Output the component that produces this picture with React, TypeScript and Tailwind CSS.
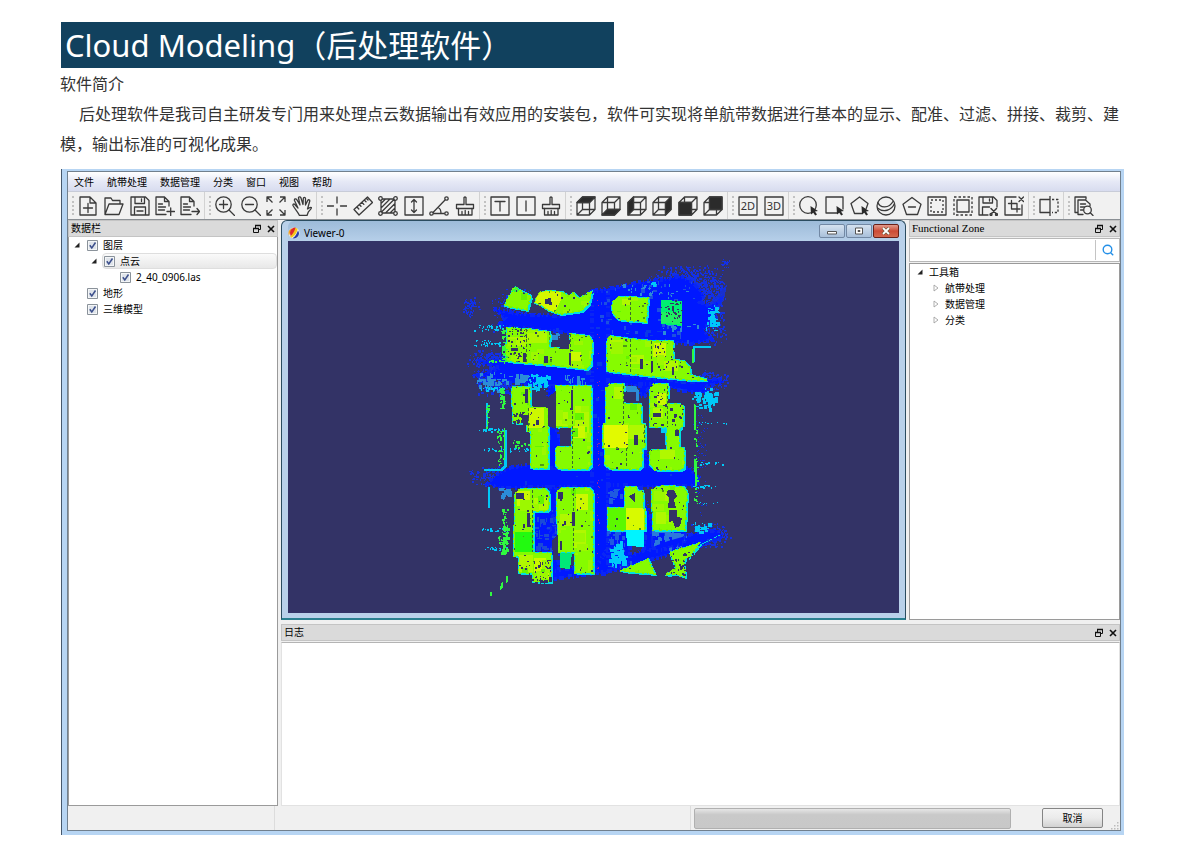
import React from 'react';

const uiFont = "font-['Noto_Sans','Noto_Sans_CJK_SC',sans-serif]";

/* ---------- toolbar icons ---------- */

function Icon({ children, label }: { children: React.ReactNode; label: string }) {
  return (
    <button type="button" aria-label={label} className="flex size-5 shrink-0 items-center justify-center">
      <svg viewBox="0 0 20 20" className="size-5" fill="none" stroke="#3a3a3a" strokeWidth="1.3" strokeLinejoin="round" strokeLinecap="round">
        {children}
      </svg>
    </button>
  );
}

const cursor = <path d="M11.5 10l7.500 5-3 .6 2 2.900-1.800 1.100-1.900-2.800-2.300 1.800z" fill="#2b2b2b" stroke="none" />;
const docLines = (
  <>
    <path d="M11 18.500H1V1h8.500l4.500 4.500V10M9.500 1v4.500H14" />
    <path d="M3.500 8h4M3.500 11h7M3.500 14h6" />
  </>
);
const brush = (
  <>
    <path d="M9 8.500V1.500q1-1 2 0V8.500h7.500v4H1.500v-4z" />
    <path d="M3.500 12.500v6.500h13.500v-6.500M7 19v-3.500M10.200 19v-4.500M13.500 19v-3.500" />
  </>
);
const cubeWire = <path d="M1 6.500h12.500V19H1zM6.500 1H19v12.500H6.500zM1 6.500L6.500 1M13.500 6.500L19 1M13.500 19l5.500-5.500M1 19l5.500-5.500" />;
const cube = (fill: string) => (
  <>
    {cubeWire}
    <path d={fill} fill="#2b2b2b" />
  </>
);
const floppy = 'M1 1h14.500L19 4.500V19H1zM5 1v6.500h9.500V1M11.500 3v2.500M4.500 19v-8h11v8';

type Tool = [string, React.ReactNode];
const groups: { width: string; tools: Tool[] }[] = [
  {
    width: 'w-[121px]',
    tools: [
      ['New', <path key="a" d="M1 1h10l6 6v12H1zM11 1v6h6M4.500 12h9M9 7.500v9" />],
      ['Open', <path key="a" d="M1 18.500V2h6l1.500 2.500H16V8M1 18.500L5 8h14l-4 10.500z" />],
      ['Save', <path key="a" d={floppy + 'M7 15h6'} />],
      ['Add file', <g key="a">{docLines}<path d="M12 15.500H19.500M15.700 12v7.500" /></g>],
      ['Export file', <g key="a">{docLines}<path d="M12 15.500h7.500M17 12.500l2.500 3-2.500 3" /></g>],
    ],
  },
  {
    width: 'w-[97px]',
    tools: [
      ['Zoom in', <g key="a"><circle cx="8.500" cy="8.500" r="7.700" /><path d="M14 14l5.500 5.500M4.500 8.500h8M8.500 4.500v8" /></g>],
      ['Zoom out', <g key="a"><circle cx="8.500" cy="8.500" r="7.700" /><path d="M14 14l5.500 5.500M4.500 8.500h8" /></g>],
      ['Fit view', <path key="a" strokeLinecap="butt" d="M1 6V1h5M1 1l5.500 5.500M14 1h5v5M19 1l-5.500 5.500M1 14v5h5M1 19l5.500-5.500M14 19h5v-5M19 19l-5.500-5.500" />],
      ['Pan', <path key="a" d="M7.500 19.500C6 16 2.500 12.500 1 9.500 .6 8 2 7.500 3 8.700L6 12 2.500 4.500C2 3 4 2.200 4.800 3.700L8 9 6.500 2C6.300.6 8.400.3 8.900 1.700L11 8.500l.3-6C11.400 1 13.400 1 13.500 2.500V9l2.200-4.500c.7-1.300 2.400-.6 2 .8L15.500 13c1.200-1 3-2.200 3.800-1.500.8.800-2 3-3 4.500L15 19.500z" />],
    ],
  },
  {
    width: 'w-[148px]',
    tools: [
      ['Pick point', <path key="a" d="M0 10h6.500M13.500 10H20M10 1v6M10 13v6" />],
      ['Measure distance', <path key="a" d="M1 13.500L14.500 1 19.500 6.500 6 19zM4 11l1.800 2M6.500 8.700L8 10.300M9 6.400l1.800 2M11.500 4.200L13 5.800M13.500 2.500l1.500 1.500" />],
      ['Measure area', <g key="a"><path d="M3 3h14v14H3zM3 7.500L7.500 3M3 12L12 3M3 16.500L16.500 3M7.500 17L17 7.500M12 17l5-5" /><g fill="#f1f1f1"><circle cx="2.500" cy="2.500" r="1.800" /><circle cx="17.500" cy="2.500" r="1.800" /><circle cx="2.500" cy="17.500" r="1.800" /><circle cx="17.500" cy="17.500" r="1.800" /></g></g>],
      ['Measure height', <path key="a" d="M1 1h18v18H1zM10 4v12M7.500 6L10 3.500 12.500 6M7.500 14l2.500 2.500 2.500-2.500" />],
      ['Measure angle', <g key="a"><path d="M16.500 3.500L4 16.500M4.500 17.500h12M9 11.500c2.500 1 3 3 3 6" /><g fill="#f1f1f1"><circle cx="17.500" cy="2.500" r="1.700" /><circle cx="2.500" cy="17.500" r="1.700" /><circle cx="17.500" cy="17.500" r="1.700" /></g></g>],
      ['Clear measurements', <g key="a">{brush}</g>],
    ],
  },
  {
    width: 'w-[71px]',
    tools: [
      ['Text', <path key="a" d="M1 1h18v18H1zM5 5.500h10M10 5.500V15" />],
      ['Insert', <path key="a" d="M1 1h18v18H1zM10 5v10" />],
      ['Clear text', <g key="a">{brush}</g>],
    ],
  },
  {
    width: 'w-[147px]',
    tools: [
      ['Top view', cube('M1 6.500L6.500 1H19l-5.500 5.500z')],
      ['Bottom view', cube('M1 19l5.500-5.500H19L13.500 19z')],
      ['Left view', cube('M1 6.500L6.500 1v12.500L1 19z')],
      ['Right view', cube('M13.500 6.500L19 1v12.500L13.500 19z')],
      ['Front view', cube('M1 6.500h12.500V19H1z')],
      ['Back view', cube('M6.500 1H19v12.500H6.500z')],
    ],
  },
  {
    width: 'w-[46px]',
    tools: [
      ['2D view', <g key="a"><path d="M1 1h18v18H1z" /><text x="10" y="13.800" textAnchor="middle" fontSize="11" fill="#333" stroke="none" fontFamily="Noto Sans, sans-serif">2D</text></g>],
      ['3D view', <g key="a"><path d="M1 1h18v18H1z" /><text x="10" y="13.800" textAnchor="middle" fontSize="11" fill="#333" stroke="none" fontFamily="Noto Sans, sans-serif">3D</text></g>],
    ],
  },
  {
    width: 'w-[225px]',
    tools: [
      ['Circle select', <g key="a"><circle cx="9" cy="9" r="8.300" />{cursor}</g>],
      ['Rectangle select', <g key="a"><path d="M12 17H1V1h17v12" />{cursor}</g>],
      ['Polygon select', <g key="a"><path d="M12 17.500H4.500L1 7.500 9.500 1 18 7.500l-1.800 5" />{cursor}</g>],
      ['Sphere select', <g key="a"><circle cx="10" cy="10" r="9" /><path d="M2 6.500c2 6 11 6 15-1M1.500 12c6 5 14 2.500 17-4.500" /></g>],
      ['Remove polygon', <path key="a" d="M10 1.500l9 6.800-3.500 10.200h-11L1 8.300zM6.500 11h7" />],
      ['Clip inside', <g key="a"><path d="M1 1h18v18H1z" /><path strokeDasharray="2 2" strokeLinecap="butt" d="M4 4h12v12H4z" /></g>],
      ['Clip outside', <g key="a"><path d="M4 4h12v12H4z" /><path strokeDasharray="2.500 2" strokeLinecap="butt" d="M1 1h18v18H1z" /></g>],
      ['Save clip', <g key="a"><path d="M10 19H1V1h14.500L19 4.500V11M5 1v6h9.500V1M11.500 3v2M4.500 19v-8h7" /><path d="M13 12.500l5.500 5.500M18.500 12.500L13 18" strokeWidth="1.500" /><circle cx="13" cy="18.500" r="1" /><circle cx="18.500" cy="18.500" r="1" /></g>],
      ['Crop', <path key="a" d="M12 1H1v18h17V9M15 1l4.500 4.500M19.500 1L15 5.500M7.500 4.500v8.500H16M4.500 7.500H13V16" />],
    ],
  },
  {
    width: 'w-5',
    tools: [['Split', <g key="a"><path d="M11 3.500H1v13h10M11 0v20" /><path strokeDasharray="2.200 1.800" strokeLinecap="butt" d="M13 3.500h6v13h-6" /></g>]],
  },
  {
    width: 'w-5',
    tools: [['Report', <g key="a"><path d="M4 16.500H1V1h11v2M9 18.500H4V4h7.500L16 8v2M6.500 8h5M6.500 11h4M6.500 14h2.500" /><circle cx="13.500" cy="14" r="3.800" /><path d="M16.300 16.800L19 19.500" /></g>]],
  },
];

function Grip({ first = false }: { first?: boolean }) {
  return (
    <div className={first ? 'flex w-[11px] shrink-0 pl-1' : 'flex w-[15px] shrink-0 pl-1'}>
      {!first && <div className="mr-1 w-px self-stretch bg-[#d2d2d2]" />}
      <div className="my-1 w-0 border-l-2 border-dotted border-[#c2c2c2]" />
    </div>
  );
}

/* ---------- point cloud ---------- */

function random(seed: number) {
  let s = seed;
  return () => {
    s = (s * 1664525 + 1013904223) % 4294967296;
    return s / 4294967296;
  };
}

function specks(seed: number, n: number, x: number, y: number, w: number, h: number, max = 1) {
  const r = random(seed);
  let d = '';
  for (let i = 0; i < n; i++) {
    const px = Math.round(x + ((r() + r()) / 2) * w);
    const py = Math.round(y + ((r() + r()) / 2) * h);
    const a = 1 + Math.floor(r() * max);
    const b = 1 + Math.floor(r() * max);
    d += `M${px} ${py}h${a}v${b}h-${a}z`;
  }
  return d;
}

function scatter(seed: number, n: number, x: number, y: number, w: number, h: number, max = 1) {
  const r = random(seed);
  let d = '';
  for (let i = 0; i < n; i++) {
    const px = Math.round(x + r() * w);
    const py = Math.round(y + r() * h);
    const a = 1 + Math.floor(r() * max);
    const b = 1 + Math.floor(r() * max);
    d += `M${px} ${py}h${a}v${b}h-${a}z`;
  }
  return d;
}

const ground = [
  'M494 309L520 314 560 316 592 291 618 287 640 282 668 279 680 276 692 282 700 290 704 296 700 302 710 306 720 300 712 318 704 330 712 340 690 344 640 340 592 336 560 332 530 329 498 326 505 318z',
  'M478 361L507 361 560 366 592 370 606 372 650 378 690 382 718 379 724 382 704 387 710 394 690 392 660 386 606 385 590 386 540 386 505 382 478 375 500 368z',
  'M496 475L508 468 528 465 548 468 590 470 645 466 650 460 655 467 690 468 698 478 698 486 650 487 606 490 592 487 550 487 500 488 487 484z',
  'M592 291H608V574L592 573z',
  'M592 573L618 570 650 560 700 546 722 537 718 530 700 532 668 541 640 552 625 557 607 550z',
  'M548 386h9v50l4 0v32h-14zM549 487h8v25l2 66h-9z',
  'M532 510h16l12 15-11 4 12 14-14 8h-15z',
  'M608 485h18v24h-18zM608 530h22v36h-22z',
  'M640 384h11l-6 12h-5zM645 450l6 16h-8zM645 500l8 24v26h-9z',
  'M652 530h34l-2 14-30 8z',
  'M550 572l42-8v10l-44 6z',
];

const buildings = [
  'M507 300L512 291 514 287 519 290 531 296 529 303 527 310 505 306z',
  'M535 303L537 296 541 292 547 291 562 292 568 296 573 293 579 298 592 291 589 303 581 311 560 314 550 311 541 305z',
  'M612 306Q613 296 624 297L648 298 646 322 620 320Q612 315 612 306z',
  'M507 328L527 329 550 332 549 348 569 349 570 334 588 336Q592 338 592 342L591 365 586 369 560 366 506 361z',
  'M610 336L630 339 652 341 673 341 673 360 684 361 690 368 690 375 708 380 690 380 650 376 607 371 607 341z',
  'M512 387h18v20h18v61h-17v-37h-4v-8h-14z',
  'M556 386h35v80l-4 3h-28l-3-3v-19h16v-20h-16z',
  'M606 388l4-4h14v20h17v20h4v24h-3v17l-4 4h-27l-6-4v-17h-2v-24h3z',
  'M650 388l4-4h14v20h15v21l-4 5v18h5v20l-4 2h-25l-5-5v-15h17v-23h-17z',
  'M515 493l5-4h25l4 4v16l-3 2h-13v42h18v29h-18v-9h-14v-17h-5z',
  'M557 491l5-3h27l4 4v81h-18v-21h-17z',
  'M625 487h11l2 4h5v18h2v21h-37v-22h17z',
  'M652 490q4-4 14-4l18 1 3 5-2 38h-32z',
  'M620 571L648 559 655 574z',
  'M670 552L700 543 690 556 684 560 685 577 675 574 665 575 676 568z',
];

const yellows = [
  [548, 300, 10, 6], [508, 337, 18, 9], [527, 331, 20, 12], [571, 352, 10, 12],
  [622, 299, 9, 6], [610, 340, 13, 11], [653, 343, 13, 14], [630, 355, 14, 9], [664, 361, 14, 10],
  [529, 408, 15, 20], [575, 406, 14, 32], [556, 412, 12, 14], [573, 426, 12, 12], [614, 387, 8, 12],
  [628, 425, 16, 14], [657, 393, 9, 12], [660, 450, 15, 9], [653, 408, 10, 10],
  [517, 491, 13, 15], [534, 498, 14, 12], [560, 514, 11, 12], [576, 494, 12, 16], [574, 530, 12, 18],
  [518, 555, 15, 17], [534, 558, 12, 14], [654, 492, 14, 9], [656, 512, 10, 12], [540, 573, 9, 6],
];

const bg = '#333366';

function PointCloud() {
  const all = buildings.join('');
  return (
    <svg viewBox="288 241 611 372" className="block h-[372px] w-full" shapeRendering="crispEdges" role="img" aria-label="Point cloud">
      <defs>
        <clipPath id="roofs"><path d={all} /></clipPath>
        <clipPath id="ground"><path d={ground.join('')} /></clipPath>
      </defs>

      <g fill="#1230e8">
        <path d={specks(3, 900, 646, 264, 80, 42, 2)} />
        <path d={specks(4, 480, 680, 282, 48, 64, 2)} />
        <path d={specks(5, 70, 460, 296, 20, 22, 2)} />
        <path d={specks(6, 150, 490, 286, 44, 50, 2)} />
        <path d={specks(7, 160, 466, 348, 50, 20, 2)} />
        <path d={specks(8, 260, 472, 362, 46, 34, 3)} />
        <path d={specks(9, 150, 690, 370, 40, 20, 2)} />
        <path d={specks(10, 180, 466, 464, 60, 24, 2)} />
        <path d={specks(11, 180, 690, 522, 42, 26, 2)} />
        <path d={specks(12, 80, 692, 400, 16, 120, 1)} />
        <path d={specks(14, 40, 720, 258, 10, 10, 1)} />
        <path d="M700 318L712 300 720 292 727 284 724 300 714 316 704 326z" opacity=".8" />
      </g>

      {ground.map((d) => <path key={d} d={d} fill="#0018ff" stroke="#0a26f4" strokeWidth="4" strokeDasharray="3 2 1 3 2 4 5 2" />)}
      <g clipPath="url(#ground)">
        <path d={scatter(21, 110, 490, 300, 230, 280, 5)} fill="#0a38e6" />
        <path d={scatter(22, 60, 600, 280, 110, 60, 4)} fill="#1c50e0" />
        <path d={scatter(23, 60, 607, 486, 20, 80, 6)} fill="#1f5ae0" />
        <path d={scatter(24, 50, 652, 530, 34, 18, 5)} fill="#2c78dc" />
        <path d={scatter(28, 40, 532, 510, 24, 40, 5)} fill="#1a4ad8" />
      </g>
      <path d={scatter(25, 44, 597, 295, 2, 276)} fill="#9a20a0" />

      <g fill="#2b8cd8">
        <path d={specks(31, 40, 472, 369, 40, 22, 4)} />
        <path d={specks(32, 14, 512, 372, 14, 12, 6)} />
        <path d={specks(33, 16, 562, 374, 26, 10, 5)} />
        <path d={specks(34, 10, 548, 328, 12, 14, 4)} />
        <path d={specks(35, 16, 495, 486, 16, 10, 5)} />
        <path d={specks(36, 30, 612, 282, 80, 18, 3)} />
        <path d={specks(37, 24, 652, 318, 46, 14, 4)} />
        <path d="M624 386h12l3 5v10h-3v-8l-12-2z" />
      </g>
      <g fill="#00c8f8">
        <path d={specks(41, 70, 525, 371, 24, 20, 4)} />
        <path d={specks(42, 70, 691, 386, 28, 22, 4)} />
        <path d={specks(43, 46, 705, 303, 13, 28, 4)} />
        <path d={specks(44, 56, 608, 540, 18, 26, 6)} />
        <path d={specks(45, 20, 690, 521, 22, 12, 4)} />
        <path d={specks(46, 14, 650, 280, 6, 6, 3)} />
        <path d="M486 403h2v26h-2zM504 430h3v36l-5 5h-18v-2h16l4-4zM488 487h2v21h-2zM693 346h18v2h-16v14h-2zM661 427h6v18h-2v-12h-4z" />
        <path d={scatter(47, 34, 474, 325, 32, 5, 2)} />
        <path d={scatter(48, 30, 474, 340, 34, 6, 2)} />
        <path d={scatter(49, 30, 482, 448, 48, 3, 2)} />
        <path d={scatter(56, 30, 480, 387, 24, 3, 2)} />
        <path d={scatter(57, 30, 478, 428, 26, 3, 2)} />
        <path d={scatter(50, 14, 692, 422, 36, 2, 1)} />
        <path d={scatter(51, 14, 692, 462, 30, 2, 2)} />
        <path d={scatter(52, 14, 692, 485, 24, 2, 2)} />
        <path d={scatter(53, 8, 692, 502, 30, 2, 1)} />
        <path d={scatter(54, 20, 480, 528, 28, 3, 2)} />
        <path d={scatter(55, 16, 484, 547, 22, 3, 2)} />
      </g>

      <g fill="#00e0e0">
        <path d={all} transform="translate(2 2)" />
        <path d={all} transform="translate(-1 1)" />
        <path d={all} transform="translate(1 -1)" />
      </g>
      <path d={all} fill="#86fb00" stroke="#7cf400" strokeWidth="2" strokeDasharray="1 3 2 4 3 5" />
      <g clipPath="url(#roofs)">
        {yellows.map(([x, y, w, h], i) => (
          <rect key={i} x={x} y={y} width={w} height={h} fill={i % 3 === 0 ? '#ccf800' : '#b0f800'} />
        ))}
        <path d={scatter(61, 90, 504, 286, 190, 290, 12)} fill="#9cf800" />
        <path d={scatter(62, 40, 504, 286, 190, 290, 9)} fill="#64f400" />
        <rect x="604" y="425" width="24" height="23" fill="#e2fa00" />
        <path d="M535 290h26v10l-6 12-20-6z" fill="#d4f800" />
        <rect x="515" y="532" width="18" height="20" fill="#22fa10" />
        <rect x="608" y="508" width="18" height="22" fill="#5cf800" />
        <rect x="626" y="508" width="18" height="22" fill="#d8fa00" />
        <path d={scatter(63, 420, 504, 286, 190, 290, 2)} fill={bg} />
        <path d={scatter(64, 160, 504, 286, 190, 290, 2)} fill="#4f9a18" />
        <path d="M526 329v33M549 332v16M570 334v32M528 408v60M572 386v82M623 386v38M626 448v20M667 386v40M532 490v62M573 488v62M630 297v24M630 339v36M651 341v18M644 420v24" stroke="#3b6a30" strokeWidth="1" strokeDasharray="3 2" />
      </g>

      <path d="M661 300l21 1 0 25-21-2z" fill="#00f070" />
      <path d="M661 312h21v12l-21-1z" fill="#20f060" />
      <path d={specks(71, 40, 660, 298, 24, 26, 2)} fill={bg} />
      <path d="M560 553h12l-2 16-10-1z" fill="#00e878" />
      <path d="M626 530h18v17l-17-1z" fill="#00f4ff" />

      <g fill={bg}>
        <path d="M545 299l6-1 1 7-7-1zM511 348h7v3h-7zM523 353h3v9h-3zM544 356h4v7h-4zM569 353h2v12h-2zM640 359h3v10h-3zM651 361h2v11h-2zM672 367h2v8h-2zM525 389h3v14h-3zM521 415h7v10h-5zM536 420h3v5h-3zM571 390h2v20h-2zM634 435h4v10h-4zM653 413h8v4h-8zM527 513h3v14h-3zM523 524h2v4h-2zM572 512h3v14h-3zM564 521h2v4h-2zM516 493h8v6h-8zM558 492h5v7h-5zM560 541h2v9h-2z" />
        <path d="M668 490l6 0 3 6-3 4 2 8-8 0 1-10-3-3zM669 510l8 0 0 7 5 1-2 8-5 2-2-7-4 1zM629 496l6-3 0 10zM533 398h12v9h-12zM538 405l18-14v38l-8-3v-18z" />
        <path d="M560 428h11v18h-11zM652 428h9v17h-9zM675 430h4v6h-4zM552 540l6-5v25h-5zM645 489l5 0-4 20z" />
        <path d="M624 392h12v10h-12zM570 340l-9 4-2 5h10z" />
        <path d={scatter(72, 40, 512, 412, 14, 22, 3)} />
        <path d={scatter(73, 30, 653, 388, 30, 40, 3)} />
        <path d={scatter(74, 50, 516, 560, 34, 24, 2)} />
        <path d={scatter(75, 46, 507, 326, 20, 34, 2)} />
        <path d={scatter(76, 30, 655, 344, 28, 26, 2)} />
        <path d={scatter(77, 70, 666, 552, 32, 26, 2)} />
        <path d={scatter(78, 14, 531, 576, 22, 8, 3)} />
      </g>

      <g fill="#30f840">
        <path d="M694 404l2 2v24h-2zM694 458l3 4v24h-2zM504 428h1v30h-1zM692 349h2v14h-2z" />
        <path d={scatter(81, 50, 500, 388, 4, 20, 2)} />
        <path d={scatter(82, 60, 502, 508, 5, 44, 3)} />
        <path d={scatter(83, 34, 694, 404, 3, 104, 2)} />
        <path d={scatter(84, 26, 498, 534, 10, 20, 3)} />
        <path d={scatter(85, 34, 497, 430, 6, 34, 2)} />
        <path d={scatter(86, 30, 501, 328, 5, 34, 3)} />
        <path d={scatter(87, 16, 488, 360, 18, 2, 2)} />
        <path d={scatter(88, 20, 512, 440, 18, 8, 2)} />
        <path d={scatter(89, 14, 512, 287, 6, 5, 2)} />
        <path d={scatter(90, 16, 486, 404, 3, 24, 2)} />
        <path d="M506 576h2v6l-2 1zM501 583l2-1v6l-3 2zM490 592h2v4h-2z" />
      </g>
      <path d="M700 545L720 535" stroke="#00e0d0" strokeWidth="1" strokeDasharray="4 1" />
    </svg>
  );
}

/* ---------- docks and trees ---------- */

function DockButtons() {
  return (
    <div className="flex items-center gap-1">
      <button type="button" aria-label="Float" className="size-2.5">
        <svg viewBox="0 0 10 10" className="size-2.5" fill="none" stroke="#111">
          <path d="M3.500 4V1.500h5v4H6.500" /><path d="M3 1.500h6M1 4.500h6" strokeWidth="1.600" /><path d="M1.500 4.500h5v4h-5z" />
        </svg>
      </button>
      <button type="button" aria-label="Close" className="size-2.5">
        <svg viewBox="0 0 10 10" className="size-2.5" stroke="#111" strokeWidth="1.600"><path d="M2 2l6 6M8 2L2 8" /></svg>
      </button>
    </div>
  );
}

function DockTitle({ children }: { children: React.ReactNode }) {
  return (
    <div className="flex h-[17px] items-center justify-between border border-[#c4c4c4] bg-[#dadada] pr-px pl-0.5">
      {children}
      <DockButtons />
    </div>
  );
}

function OpenArrow() {
  return <svg viewBox="0 0 6 6" className="size-1.5 shrink-0"><path d="M5.500 .5v5h-5z" fill="#222" /></svg>;
}

function ClosedArrow() {
  return <svg viewBox="0 0 6 8" className="h-2 w-1.5 shrink-0"><path d="M1 1l4 3-4 3z" fill="#fff" stroke="#999" strokeWidth=".8" /></svg>;
}

function CheckRow({ label, indent, open = false, active = false }: { label: string; indent: string; open?: boolean; active?: boolean }) {
  return (
    <li className={`flex h-4 items-center ${indent}`}>
      <span className="flex w-[11px] shrink-0">{open && <OpenArrow />}</span>
      <label
        className={
          active
            ? 'flex h-4 grow items-center gap-[5px] rounded-sm border border-[#dedede] bg-linear-to-b from-[#fafafa] to-[#e8e8e8] pl-px'
            : 'flex h-4 grow items-center gap-[5px] pl-0.5'
        }
      >
        <input type="checkbox" defaultChecked className="peer sr-only" />
        <svg viewBox="0 0 11 11" className="size-[11px] shrink-0 text-[#3c4f8c] peer-[:not(:checked)]:text-transparent">
          <path d="M.5 .5h10v10H.5z" fill="#f4f6f8" stroke="#8a929a" />
          <path d="M2 2h7v7H2z" fill="#dfe4ea" />
          <path d="M2.800 5.200l2 2.800L8.500 2.500" fill="none" stroke="currentColor" strokeWidth="1.500" />
        </svg>
        {label}
      </label>
    </li>
  );
}

function ToolRow({ label }: { label: string }) {
  return <li className="flex h-4 items-center gap-1.5 pl-[23px]"><ClosedArrow />{label}</li>;
}

const winBtn = 'flex h-[14px] w-[26px] items-center justify-center rounded-xs border';

function ViewerWindow() {
  return (
    <section className="flex min-w-0 flex-1 flex-col rounded-t-md border border-b-2 border-[#2b4c60] border-b-[#2a8090] bg-[#b9d1ea] px-1.5 pb-[5px]">
      <header className="flex h-5 items-center justify-between rounded-t-md bg-linear-to-b from-[#9dbbd9] to-[#b6cfe9]">
        <div className="flex items-center gap-1 pt-1">
          <svg viewBox="0 0 12 12" className="size-3">
            <circle cx="6" cy="6" r="5.500" fill="#f6f2e8" />
            <path d="M1 8.500A5.500 5.500 0 0 1 1.500 3L4 1z" fill="#f4a020" />
            <path d="M3 9.500C1 6 2 2 6 .5l2 .3C8 4 6 7.500 3 9.500z" fill="#e02a2a" />
            <path d="M2 9.500C5 7.500 6.500 4 7.500 .8l2 1C9.500 5 7 9 3.500 10.800z" fill="#f6c81c" />
            <path d="M4.500 11.200C7.500 9.500 9 6 10 3.500c2.500 3.500 0 7.500-4 8z" fill="#2b3ca8" />
          </svg>
          <h2 className="text-[10px] leading-4">Viewer-0</h2>
        </div>
        <div className="flex gap-px">
          <button type="button" aria-label="Minimize" className={`${winBtn} border-[#7288a4] bg-linear-to-b from-[#d5e2f0] to-[#a9c0da]`}>
            <svg viewBox="0 0 10 8" className="h-2 w-2.5"><path d="M.5 4.500h9v2.500h-9z" fill="#fff" stroke="#555" /></svg>
          </button>
          <button type="button" aria-label="Maximize" className={`${winBtn} border-[#7288a4] bg-linear-to-b from-[#d5e2f0] to-[#a9c0da]`}>
            <svg viewBox="0 0 10 8" className="h-2 w-2.5"><path d="M1.500 1h7v6h-7z" fill="#fff" stroke="#555" /><path d="M4 3.500h2v1H4z" fill="#555" stroke="#555" /></svg>
          </button>
          <button type="button" aria-label="Close viewer" className={`${winBtn} border-[#6a2018] bg-linear-to-b from-[#e09a8c] via-[#cc4a36] to-[#d4684e]`}>
            <svg viewBox="0 0 10 8" className="h-2 w-2.5"><path d="M2 1l6 6M8 1L2 7" stroke="#553" strokeWidth="3" /><path d="M2 1l6 6M8 1L2 7" stroke="#fff" strokeWidth="1.800" /></svg>
          </button>
        </div>
      </header>
      <div className="flex-1 bg-[#333366]">
        <PointCloud />
      </div>
    </section>
  );
}

const menus = ['文件', '航带处理', '数据管理', '分类', '窗口', '视图', '帮助'];

export default function App() {
  return (
    <main className={`bg-white pt-[22px] pr-[76px] pb-5 pl-[61px] text-black ${uiFont}`}>
      <h1 className="flex h-[46px] w-[553px] max-w-full items-center bg-[#11415e] pl-1 text-[31px] leading-[46px] whitespace-nowrap text-white">
        Cloud Modeling（后处理软件）
      </h1>
      <div className="-ml-px pt-px text-base leading-[30px] text-[#333]">
        <p>软件简介</p>
        <p className="indent-[19px]">
          后处理软件是我司自主研发专门用来处理点云数据输出有效应用的安装包，软件可实现将单航带数据进行基本的显示、配准、过滤、拼接、裁剪、建模，输出标准的可视化成果。
        </p>
      </div>

      <div className="mt-2.5 border-l border-[#46586c] bg-[#b7d5f3] pt-0.5 pr-[3px] pb-1 pl-[5px] text-[10px]">
        <div className="border border-[#71808e] bg-[#f0f0f0]">
          <nav className="flex h-[19px] items-center gap-[13px] bg-linear-to-b from-white via-[#e6e9f6] to-[#d8dcef] pl-1.5">
            {menus.map((m) => <button type="button" key={m} className="leading-4">{m}</button>)}
          </nav>

          <div className="flex h-7 items-stretch border-t border-[#c8ccd8] bg-[#f1f1f1]">
            {groups.map((g, i) => (
              <React.Fragment key={i}>
                <Grip first={i === 0} />
                <div className={`flex shrink-0 items-center justify-between ${g.width}`}>
                  {g.tools.map(([label, art]) => <Icon key={label} label={label}>{art}</Icon>)}
                </div>
              </React.Fragment>
            ))}
          </div>

          <div className="flex gap-[3px] border-t border-[#8a8f94]">
            <aside className="flex w-[210px] shrink-0 flex-col">
              <DockTitle><h2>数据栏</h2></DockTitle>
              <ul className="flex-1 border border-t-0 border-[#9a9a9a] bg-white">
                <CheckRow label="图层" indent="pl-[5px]" open />
                <CheckRow label="点云" indent="pl-[22px]" open active />
                <CheckRow label="2_40_0906.las" indent="pl-[38px]" />
                <CheckRow label="地形" indent="pl-[5px]" />
                <CheckRow label="三维模型" indent="pl-[5px]" />
              </ul>
            </aside>

            <div className="flex min-w-0 flex-1 flex-col gap-1">
              <div className="flex gap-[3px]">
                <ViewerWindow />
                <aside className="flex w-[211px] shrink-0 flex-col">
                  <DockTitle><h2 className="font-['Liberation_Serif',serif] text-[11px]">Functional Zone</h2></DockTitle>
                  <div className="mt-px flex h-6 border border-[#b8b8b8] bg-white">
                    <input type="search" aria-label="Search tools" className="min-w-0 flex-1 px-1 outline-none" />
                    <button type="button" aria-label="Search" className="my-px flex w-6 items-center justify-center border-l border-[#c4c4c4]">
                      <svg viewBox="0 0 12 12" className="size-3" fill="none" stroke="#2490e8" strokeWidth="1.400"><circle cx="5.500" cy="5.500" r="4.300" /><path d="M8.700 8.700l2.500 2.500" /></svg>
                    </button>
                  </div>
                  <ul className="mt-px flex-1 border border-[#9a9a9a] bg-white">
                    <li className="flex h-4 items-center gap-1.5 pl-[7px]"><OpenArrow />工具箱</li>
                    <ToolRow label="航带处理" />
                    <ToolRow label="数据管理" />
                    <ToolRow label="分类" />
                  </ul>
                </aside>
              </div>

              <section>
                <DockTitle><h2>日志</h2></DockTitle>
                <div className="mt-px min-h-[164px] border border-[#e2e2e2] border-t-[#b4b4b4] bg-white" />
              </section>
            </div>
          </div>

          <footer className="flex h-6 items-center">
            <div className="w-[207px] self-stretch border-r border-[#dcdcdc]" />
            <div className="flex-1 self-stretch border-r border-[#dcdcdc]" />
            <div
              role="progressbar"
              aria-label="Progress"
              className="ml-[3px] h-[21px] w-[317px] rounded-xs border border-[#b0b0b0] bg-linear-to-b from-[#e6e6e6] via-[#c9c9c9] via-30% to-[#c8c8c8]"
            />
            <button type="button" className="ml-[31px] h-5 w-[61px] rounded-xs border border-[#858585] bg-linear-to-b from-[#f4f4f4] via-[#ebebeb] to-[#d2d2d2] leading-4">
              取消
            </button>
            <svg viewBox="0 0 8 8" className="mr-px ml-2 size-2 self-end" fill="#bcbcbc">
              <path d="M6 0h1.500v1.500H6zM3 3h1.500v1.500H3zM6 3h1.500v1.500H6zM0 6h1.500v1.500H0zM3 6h1.500v1.500H3zM6 6h1.500v1.500H6z" />
            </svg>
          </footer>
        </div>
      </div>
    </main>
  );
}
